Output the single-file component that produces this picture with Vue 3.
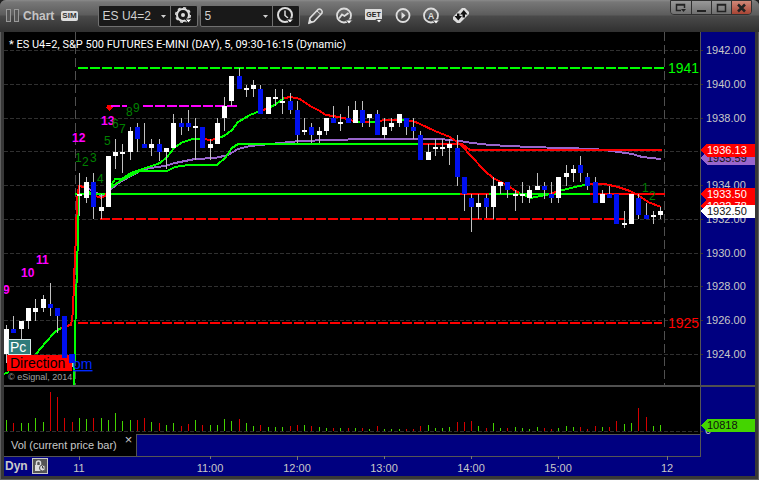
<template>
  <div class="window">
    <header class="toolbar">
      <svg class="grip" width="14" height="14" viewBox="0 0 14 14">
        <rect x="0.5" y="0.5" width="4" height="12" />
        <rect x="8.5" y="0.5" width="4" height="12" />
      </svg>
      <h1>Chart</h1>
      <span class="sim">SIM</span>

      <div class="combo symbol">
        <select v-model="symbol" aria-label="Symbol">
          <option>ES U4=2</option>
        </select>
        <svg class="caret" width="5" height="3" viewBox="0 0 5 3"><path d="M0 0h5L2.500 3z" /></svg>
        <button aria-label="Symbol settings">
          <svg width="18" height="18" viewBox="0 0 18 18">
            <circle cx="8" cy="8" r="6" fill="none" stroke="#ddd" stroke-width="2" />
            <circle cx="8" cy="8" r="7.300" fill="none" stroke="#ddd" stroke-width="1.500" stroke-dasharray="3 2.730" />
            <circle cx="8" cy="8" r="2" fill="#ddd" />
            <path d="M10 12h7l-3.500 4z" fill="#fff" stroke="#191919" />
          </svg>
        </button>
      </div>

      <div class="combo interval">
        <select v-model="interval" aria-label="Interval">
          <option>5</option>
        </select>
        <svg class="caret" width="5" height="3" viewBox="0 0 5 3"><path d="M0 0h5L2.500 3z" /></svg>
        <button aria-label="Time template">
          <svg width="18" height="18" viewBox="0 0 18 18">
            <circle cx="8" cy="8" r="7" fill="none" stroke="#ddd" stroke-width="2" />
            <path d="M8 3.500v5l3 2.500" fill="none" stroke="#ddd" stroke-width="1.500" />
            <path d="M9.500 12h7l-3.500 4z" fill="#fff" stroke="#191919" />
          </svg>
        </button>
      </div>

      <nav class="tools">
        <button aria-label="Draw">
          <svg width="18" height="18" viewBox="0 0 18 18">
            <path d="M2 16l1-5 8-8.500c2-1.500 5 1 4 3.500L7 14.500z" fill="none" stroke="#ddd" stroke-width="1.600" />
            <path d="M10 4l4 3.500M2 16l3-1-2-2z" fill="#ddd" stroke="#ddd" />
          </svg>
        </button>
        <button aria-label="Studies">
          <svg width="18" height="18" viewBox="0 0 18 18">
            <circle cx="8" cy="8.500" r="7" fill="none" stroke="#ddd" stroke-width="1.800" />
            <path d="M3 11.500L6 7.500l2.500 1.500L12.500 6" fill="none" stroke="#ddd" stroke-width="1.800" />
            <path d="M9.500 13h7l-3.500 4z" fill="#fff" stroke="#4a4a4a" />
          </svg>
        </button>
        <button aria-label="Get">
          <svg width="18" height="18" viewBox="0 0 18 18">
            <rect x="0" y="2" width="17" height="11" rx="1" fill="#ddd" />
            <text x="8.500" y="10" text-anchor="middle" font-size="7" font-weight="bold" fill="#222">GET</text>
            <path d="M11 12.500h6l-3 3.500z" fill="#fff" stroke="#4a4a4a" />
          </svg>
        </button>
        <button aria-label="Play">
          <svg width="18" height="18" viewBox="0 0 18 18">
            <circle cx="9" cy="8.500" r="6.500" fill="none" stroke="#ddd" stroke-width="1.800" />
            <path d="M7.500 5v7l4-3.500z" fill="#ddd" />
          </svg>
        </button>
        <button aria-label="Alerts">
          <svg width="18" height="18" viewBox="0 0 18 18">
            <circle cx="8" cy="8.500" r="7" fill="none" stroke="#ddd" stroke-width="1.800" />
            <text x="8" y="12" text-anchor="middle" font-size="9" font-weight="bold" fill="#ddd">A</text>
            <path d="M9.500 13h7l-3.500 4z" fill="#fff" stroke="#4a4a4a" />
          </svg>
        </button>
        <button aria-label="Link">
          <svg width="18" height="18" viewBox="0 0 18 18">
            <path d="M1 10L10 1h3l4 4v2L8 16H5L1 12.500z" fill="#ddd" />
            <path d="M5 6.500h2.500V9H10l-3.700 4.500L2.500 9H5z" fill="#111" />
            <path d="M10.500 10.500V7.500H8L11.800 3l3.700 4.500H13v3z" fill="#111" />
          </svg>
        </button>
      </nav>

      <div class="window-buttons">
        <button aria-label="Detach">
          <svg width="12" height="10" viewBox="0 0 12 10"><path d="M6 7.500H1.500v-6h8V5M1 2h9" fill="none" stroke="#222" stroke-width="1.500" /><path d="M6 6h5L8.500 9z" fill="#222" /></svg>
        </button>
        <button aria-label="Minimize">
          <svg width="12" height="10" viewBox="0 0 12 10"><path d="M1 7h9v2H1z" fill="#222" /></svg>
        </button>
        <button aria-label="Maximize">
          <svg width="12" height="10" viewBox="0 0 12 10"><path d="M1.500 1.500h8v7h-8zM1 2h9" fill="none" stroke="#222" stroke-width="1.500" /></svg>
        </button>
        <button class="close" aria-label="Close">
          <svg width="12" height="10" viewBox="0 0 12 10"><path d="M2 1.500l7 7M9 1.500l-7 7" stroke="#222" stroke-width="2.500" /></svg>
        </button>
      </div>
    </header>

    <main>
      <svg class="pane price" viewBox="4 32 751 353">
        <rect x="701" y="32" width="54" height="353" fill="#000080" />
        <g class="grid">
          <path v-for="p in prices" :key="p" :d="`M4 ${priceY(p)}.5H703`" />
          <path class="day" d="M75.500 32V385M664.500 32V385" />
        </g>

        <g class="signals">
          <text v-for="s in magentaMarks" :key="s[0]" class="magenta" :x="s[1]" :y="s[2]">{{ s[0] }}</text>
        </g>

        <g class="line">
          <path class="dashed" stroke="#00ff00" d="M78 68H664" />
          <path class="dashed" stroke="#ff00ff" d="M110 106H127M143 106H237" />
          <path class="dashed" stroke="#ff0000" d="M100 219H624" />
          <path class="dashed" stroke="#ff0000" d="M78 323H662" />
          <path v-for="(l, i) in lines" :key="i" :stroke="l[0]" :d="'M' + l[1]" />
        </g>

        <g v-for="(b, i) in bars" :key="i">
          <rect :x="barX(i)" :y="b[0]" width="1" :height="b[3] - b[0]" fill="#c0c0c0" />
          <rect :x="barX(i) - 2" :y="b[1]" width="5" :height="b[2] - b[1]" :fill="b[4] ? '#ffffff' : '#0010f0'" />
        </g>

        <g class="signals">
          <text v-for="(s, i) in greenMarks" :key="i" class="count" :x="s[1]" :y="s[2]">{{ s[0] }}</text>
          <path d="M107 105h4v2h2l-4 4-4-4h2z" fill="#ff0000" />
        </g>

        <text class="level" x="668" y="73" fill="#00ff00">1941</text>
        <text class="level" x="668" y="328" fill="#ff0000">1925</text>

        <rect x="8.500" y="339.500" width="22" height="15" fill="#2f7b7b" stroke="#d8e8e8" />
        <text class="level" x="10" y="352" fill="#ffffff">Pc</text>
        <rect x="7" y="355" width="65" height="16" fill="#ff0000" />
        <text class="level" x="10" y="368" fill="#000000">Direction</text>
        <text class="level" x="73" y="369" fill="#0028ff" text-decoration="underline">om</text>
        <rect x="62" y="328" width="5" height="30" fill="#0010f0" />
        <rect x="69" y="354" width="5" height="9" fill="#0010f0" />
        <text class="copyright" x="8" y="380">© eSignal, 2014</text>
        <text class="title" x="9" y="48">* ES U4=2, S&amp;P 500 FUTURES E-MINI (DAY), 5, 09:30-16:15 (Dynamic)</text>

        <path d="M700.500 32V385" stroke="#555555" />
        <text v-for="p in prices" :key="p" x="706" :y="priceY(p) + 4" fill="#c8c8c8">{{ p }}.00</text>
        <g v-for="t in tags" :key="t.value">
          <path :d="`M701 ${t.y}l6 -6.500H755v13H707z`" :fill="t.fill" />
          <text x="707" :y="t.y + 4" :fill="t.color">{{ t.value }}</text>
        </g>
      </svg>

      <svg class="pane volume" viewBox="4 387 751 47">
        <rect x="701" y="387" width="54" height="47" fill="#000080" />
        <path class="grid" d="M4 431.500H703" />
        <rect
          v-for="(v, i) in volumes"
          :key="i"
          :x="barX(i)"
          :y="431 - Math.abs(v)"
          width="1"
          :height="Math.abs(v)"
          :fill="v > 0 ? '#44d400' : '#d40000'"
        />
        <path d="M700.500 387V434" stroke="#555555" />
        <text x="705" y="434" fill="#c8c8c8">0</text>
        <path d="M701 425.500l6 -6.500H755v13H707z" fill="#44d400" />
        <text x="707" y="429" fill="#101010">10818</text>
      </svg>

      <div class="tabs">
        <div class="tab">
          <span>Vol (current price bar)</span>
          <button aria-label="Close study">×</button>
        </div>
        <div class="track"></div>
        <div class="corner"></div>
      </div>

      <div class="time-axis">
        <svg class="pane" viewBox="4 456 751 20">
          <path d="M4 456.500H701" stroke="#555555" />
          <g v-for="t in times" :key="t[0]">
            <path :d="`M${t[1]}.5 456v${t[2]}`" stroke="#777777" />
            <text :x="t[1]" y="472" text-anchor="middle" fill="#c8c8c8">{{ t[0] }}</text>
          </g>
        </svg>
        <div class="mode">
          <span>Dyn</span>
          <button aria-label="Lock time">
            <svg width="12" height="12" viewBox="0 0 12 12">
              <path d="M1 5h6v6H1z" fill="#ddd" />
              <path d="M2.500 5V3a2 2 0 0 1 4 0v2" fill="none" stroke="#ddd" stroke-width="1.500" />
              <circle cx="8.500" cy="8" r="3" fill="#ddd" stroke="#555" />
              <path d="M8.500 6v2h2" fill="none" stroke="#444" />
            </svg>
          </button>
        </div>
      </div>
    </main>
  </div>
</template>

<script setup>
import { ref } from "vue";

const symbol = ref("ES U4=2");
const interval = ref("5");

const prices = [1942, 1940, 1938, 1936, 1934, 1932, 1930, 1928, 1926, 1924];

function priceY(price) {
  return Math.round(50 + (1942 - price) * 16.88);
}

function barX(i) {
  return Math.round(6.2 + i * 7.265);
}

// wick top, body top, body bottom, wick bottom, up (1) / down (0)
const bars = [
  [325, 329, 354, 363, 1], [316, 329, 333, 333, 0], [321, 321, 329, 341, 1], [308, 308, 321, 329, 1],
  [299, 308, 312, 321, 1], [295, 299, 308, 312, 1], [283, 304, 308, 316, 0], [308, 308, 316, 333, 0],
  [316, 316, 358, 363, 0], [354, 354, 363, 367, 0],
  [173, 194, 196, 216, 1], [177, 182, 198, 203, 1], [173, 182, 207, 219, 0], [194, 207, 211, 219, 1],
  [156, 156, 207, 207, 1], [139, 152, 156, 169, 1], [144, 152, 154, 173, 1], [127, 131, 152, 160, 1],
  [123, 127, 139, 152, 0], [123, 144, 148, 148, 0], [139, 144, 148, 156, 1], [139, 144, 152, 161, 0],
  [148, 148, 152, 169, 1], [114, 123, 148, 148, 1], [118, 123, 127, 135, 0],
  [110, 123, 127, 131, 0], [118, 126, 128, 160, 1], [127, 127, 148, 148, 0], [139, 144, 148, 160, 1],
  [118, 123, 144, 144, 1], [97, 106, 118, 131, 1], [76, 76, 101, 106, 1], [68, 76, 89, 89, 0],
  [85, 88, 90, 97, 1], [80, 85, 89, 97, 1], [85, 89, 114, 114, 0], [97, 97, 114, 114, 1],
  [89, 97, 99, 106, 1], [89, 101, 103, 114, 1], [93, 101, 110, 114, 0], [101, 110, 135, 143, 0],
  [118, 130, 132, 135, 1], [123, 127, 135, 143, 0],
  [127, 131, 135, 143, 1], [118, 118, 131, 135, 1], [106, 118, 123, 123, 0], [114, 122, 124, 131, 1],
  [106, 118, 123, 123, 0], [101, 110, 123, 123, 1], [101, 110, 123, 127, 0], [114, 114, 118, 127, 1],
  [110, 114, 135, 135, 0], [118, 127, 135, 139, 1], [118, 123, 127, 131, 1], [114, 114, 123, 127, 1],
  [118, 118, 127, 135, 0], [118, 127, 131, 139, 0], [131, 135, 160, 160, 0], [144, 152, 160, 160, 1],
  [139, 147, 149, 156, 1], [139, 147, 149, 156, 1], [139, 144, 148, 165, 1], [135, 148, 177, 186, 0],
  [177, 177, 194, 211, 0], [194, 198, 207, 232, 0], [194, 203, 207, 219, 1],
  [194, 198, 207, 218, 0], [177, 186, 207, 219, 1], [182, 182, 186, 194, 1], [182, 182, 190, 198, 0],
  [190, 194, 196, 211, 1], [182, 194, 196, 203, 1], [186, 190, 198, 203, 1], [173, 186, 190, 190, 1],
  [182, 186, 190, 199, 0], [182, 194, 198, 203, 0], [177, 177, 198, 203, 1], [165, 173, 177, 186, 1],
  [165, 169, 173, 182, 1], [156, 165, 173, 182, 0], [173, 177, 186, 190, 0], [177, 182, 203, 203, 0],
  [190, 194, 203, 203, 1], [186, 194, 198, 198, 0], [194, 194, 224, 224, 0], [211, 223, 225, 228, 1],
  [194, 194, 224, 224, 1], [194, 198, 215, 219, 0], [203, 215, 219, 219, 0], [211, 215, 217, 224, 1],
  [207, 211, 215, 219, 1],
];

// negative = down volume
const volumes = [
  11, -8, 8, 8, 13, 9, -39, -34, -13, -9, 13, 12, -13, 13, 11, 18, 10, 11, -11, -13, 9, -8, 6, 8, -5, -7, 11, -6,
  6, 6, 12, 10, -12, 8, 5, -6, 4, 4, 4, -5, -6, 6, -5, 4, 3, -3, 3, -3, 3, -3, 2, -5, 2, 2, 2, -2, -2, -5, 6, 3,
  3, 4, -9, -9, -10, 5, -3, 8, 3, -3, 4, 3, 2, 4, -3, -2, 3, 5, 4, -4, -2, -5, 4, -4, -10, 7, 8, -23, -14, 5, 6,
];

const red = "#ff0000";
const green = "#00ff00";
const purple = "#9966cc";

const lines = [
  [purple, "84 187 94 191 101 196 107 194 110 190 120 182 140 171 150 168 165 166 175 163 195 159 215 158 228 155 238 149 250 146 270 144 300 141 330 140 367 139 440 139 460 141 472 143 490 145 530 147 595 149 612 151 632 154 642 157 661 159"],
  // average from the session open
  [green, "75 194H460"],
  [red, "460 194H489"],
  [green, "489 194H590"],
  [red, "590 194H665"],
  [green, "4 374 9 372"],
  [green, "36 354 46 342 55 332 61 328"],
  [red, "61 328 66 326 71 325 73 312 74 280 76 235 77 200 79 186 84 187"],
  [green, "74 385 75 340 76 300 78 235 79 196"],
  [green, "84 188 92 194 96 197"],
  [red, "96 196 101 198 105 196 109 189"],
  [green, "109 189 115 179 122 179 131 173 140 170 160 163 167 157 175 147 183 142 193 139 204 139"],
  [red, "204 139 210 140 216 139"],
  [green, "216 139 224 136 232 130 238 122 250 115 260 111"],
  [red, "260 111 269 108"],
  [green, "269 108 276 104 284 98"],
  [red, "284 98 291 97 300 99 310 106 318 110 326 115 333 116 348 119 356 122"],
  [green, "356 122H365"],
  [red, "365 122H370"],
  [green, "370 122H376"],
  [red, "376 121 388 120 400 120"],
  [green, "400 120H406"],
  [red, "406 121 413 121 420 124 435 131 450 137 457 142 463 147 470 155 485 171 493 178 505 184 519 193"],
  [green, "519 193 526 196 531 198 540 196 550 194"],
  [red, "549 194 560 191"],
  [green, "559 191 575 187 589 184"],
  [red, "589 184 605 184 618 187 630 191 638 195 648 202 661 207"],
  // slow band
  [green, "109 189 120 181 140 171 167 171 175 167 188 165 217 165 225 158 232 148 238 144 418 144"],
  [red, "418 144 462 144 470 150 662 150"],
];

const magentaMarks = [
  ["9", 3, 294],
  ["10", 21, 277],
  ["11", 36, 264],
  ["12", 72, 142],
  ["13", 101, 125],
];

const greenMarks = [
  [1, 75, 162], [2, 82, 166], [3, 90, 162], [4, 97, 183], [5, 104, 145], [6, 112, 128], [7, 119, 133],
  [8, 126, 116], [9, 133, 112], [1, 642, 192], [2, 649, 200],
];

const tags = [
  { value: "1935.59", y: 158, fill: purple, color: "#101010" },
  { value: "1936.13", y: 150, fill: red, color: "#ffffff" },
  { value: "1932.78", y: 206, fill: red, color: "#ffffff" },
  { value: "1933.50", y: 194, fill: red, color: "#ffffff" },
  { value: "1932.50", y: 211, fill: "#ffffff", color: "#101010" },
];

// label, x, tick length
const times = [
  ["11", 79, 4],
  ["11:00", 210, 3],
  ["12:00", 297, 4],
  ["13:00", 384, 3],
  ["14:00", 471, 3],
  ["15:00", 558, 3],
  ["12", 667, 4],
];
</script>

<style>
body {
  background: #202020;
}
</style>

<style scoped>
.window {
  box-sizing: border-box;
  min-height: 100vh;
  padding: 0 4px 4px;
  background: #383838;
  border-radius: 6px 6px 0 0;
  box-shadow: inset 1px 0 #606060, inset -1px -1px #606060;
  font-family: "Liberation Sans", Arial, sans-serif;
  font-size: 11px;
  color: #c8c8c8;
}

button {
  display: flex;
  align-items: center;
  justify-content: center;
  padding: 0;
  border: none;
  background: none;
  color: inherit;
  font-family: inherit;
}

.toolbar {
  display: flex;
  align-items: center;
  height: 32px;
  margin: 0 -4px;
  padding: 0 7px 0 6px;
  background: linear-gradient(#8a8a8a 0, #777777 2px, #5c5c5c 15px, #4a4a4a 16px, #303030 32px);
  border-radius: 6px 6px 0 0;
}

.grip rect {
  fill: #555555;
  stroke: #999999;
}

h1 {
  margin: 0 7px 0 3px;
  font-size: 12px;
  line-height: 16px;
  color: #c4c4c4;
}

.sim {
  padding: 0 1px;
  border-radius: 2px;
  background: #dddddd;
  color: #333333;
  font-size: 8px;
  font-weight: bold;
  line-height: 10px;
}

.combo {
  position: relative;
  display: flex;
  box-sizing: border-box;
  height: 22px;
  border: 1px solid #707070;
  border-radius: 2px;
  background: #191919;
}

.symbol {
  margin-left: 20px;
}

.interval {
  margin-left: 2px;
}

.combo select {
  width: 72px;
  padding: 0 4px;
  border: none;
  border-right: 1px solid #707070;
  appearance: none;
  background: none;
  color: #d0d0d0;
  font-family: inherit;
  font-size: 12px;
}

.combo button {
  width: 26px;
}

.caret {
  position: absolute;
  right: 31px;
  top: 9px;
  fill: #d0d0d0;
}

.tools {
  display: flex;
  gap: 11px;
  margin-left: 7px;
}

.window-buttons {
  display: flex;
  align-self: flex-start;
  margin-left: auto;
  border: 1px solid #303030;
  border-radius: 0 0 4px 4px;
  overflow: hidden;
}

.window-buttons button {
  width: 20px;
  height: 13px;
  background: linear-gradient(#999999, #707070);
}

.window-buttons button + button {
  border-left: 1px solid #303030;
}

.window-buttons .close {
  background: linear-gradient(#d08878, #a84434);
}

main {
  background: #000080;
}

.pane {
  display: block;
  width: 100%;
  font-size: 11px;
}

.pane path,
.pane rect {
  shape-rendering: crispEdges;
}

.price,
.volume {
  background: #000000;
}

.price {
  border-bottom: 2px solid #505050;
}

.grid {
  fill: none;
  stroke: #303030;
  stroke-dasharray: 4 2;
}

.grid .day {
  stroke: #505050;
  stroke-dasharray: 9 4;
}

.line {
  fill: none;
  stroke-width: 2;
}

.line .dashed {
  stroke-dasharray: 10 2;
}

.title {
  fill: #ffffff;
  font-family: Roboto, "Liberation Sans", sans-serif;
}

.magenta {
  fill: #ff00ff;
  font-size: 12px;
  font-weight: bold;
}

.count {
  fill: #008000;
  font-size: 12px;
}

.level {
  font-size: 14px;
}

.copyright {
  fill: #a0a0a0;
  font-size: 9px;
}

.tabs {
  display: flex;
  height: 22px;
}

.tab {
  display: flex;
  gap: 8px;
  padding: 0 4px 0 7px;
  background: #000000;
  line-height: 22px;
  white-space: nowrap;
}

.tab button {
  height: 12px;
  font-size: 13px;
  line-height: 12px;
}

.track {
  flex: 1;
  border: 1px solid #555555;
  border-bottom: none;
}

.corner {
  /* share of the width taken by the price scale */
  width: 7.2%;
}

.time-axis {
  position: relative;
}

.mode {
  position: absolute;
  left: 1px;
  top: 2px;
  display: flex;
  align-items: center;
  gap: 4px;
  font-size: 12px;
  font-weight: bold;
}

.mode button {
  width: 16px;
  height: 16px;
  border: 1px solid #c8c8c8;
  background: #555555;
}
</style>
